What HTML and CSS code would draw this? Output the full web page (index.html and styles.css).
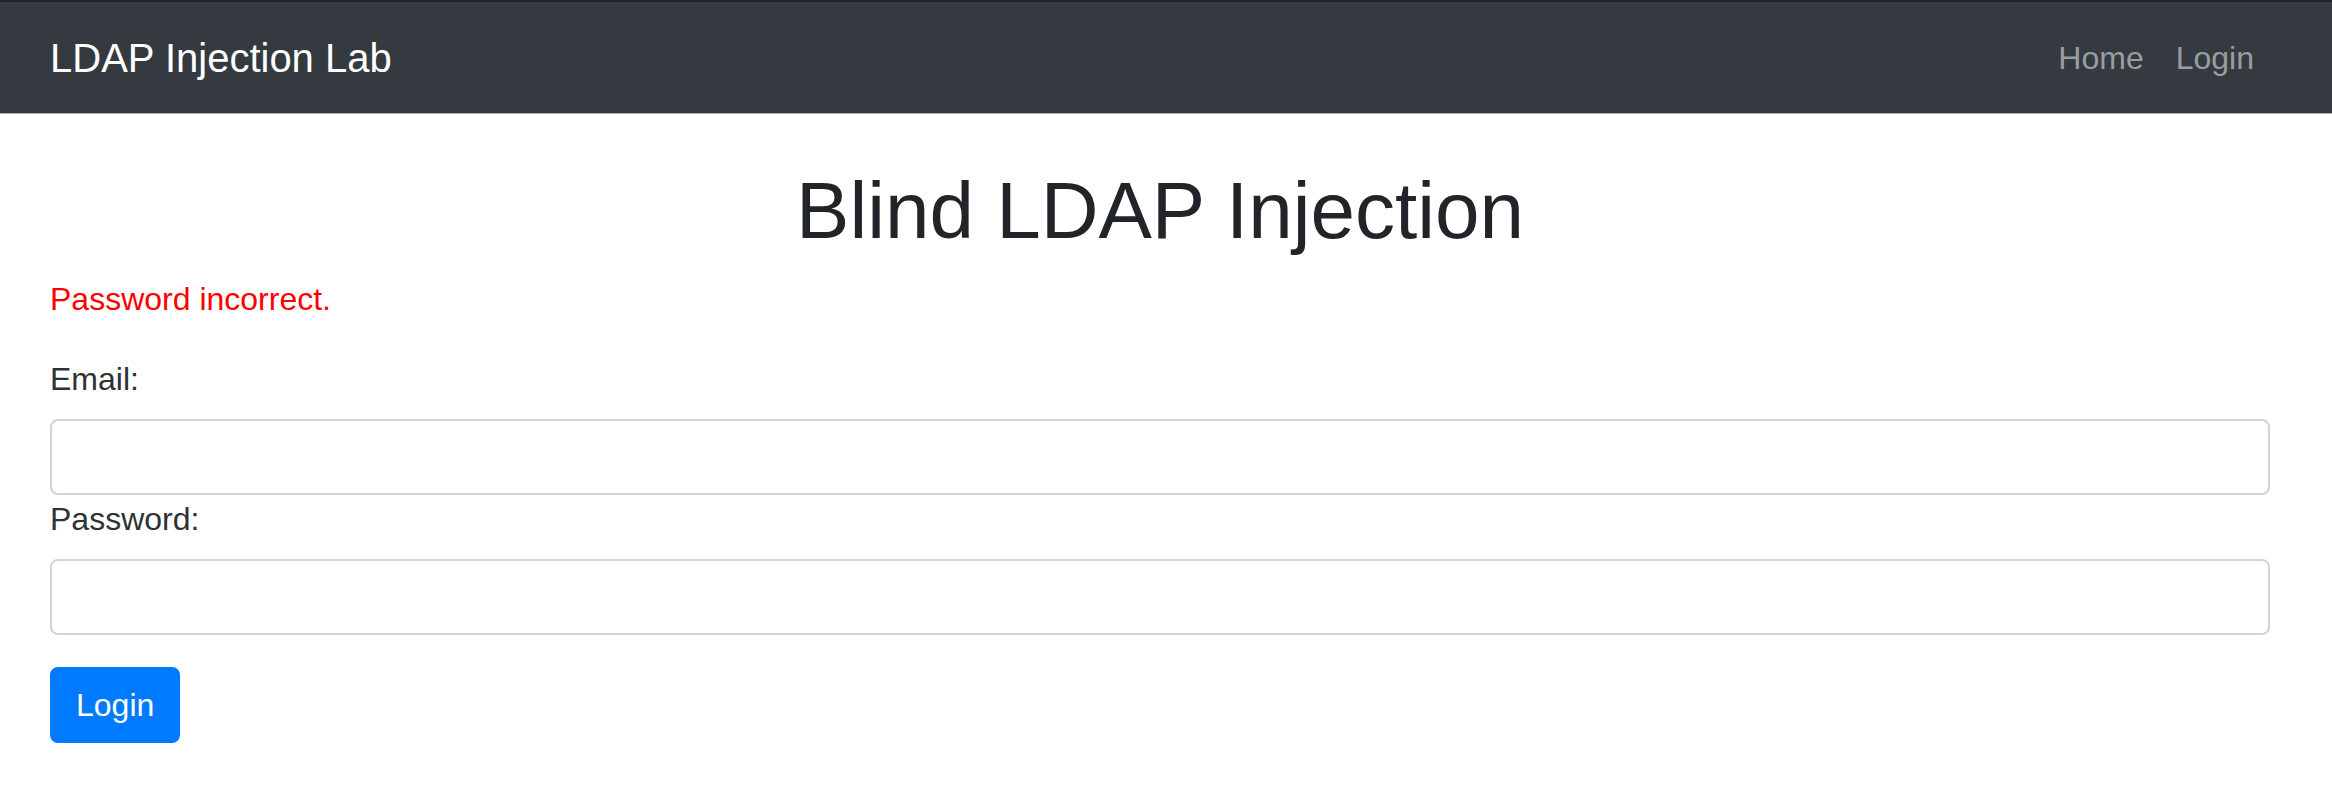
FILE: index.html
```html
<!DOCTYPE html>
<html lang="en">
<head>
<meta charset="utf-8">
<title>Blind LDAP Injection</title>
<link rel="stylesheet" href="styles.css">
</head>
<body>
<div class="topline"></div>
<nav class="navbar">
  <a class="brand" href="#">LDAP Injection Lab</a>
  <ul class="nav">
    <li><a class="nav-link" href="#">Home</a></li>
    <li><a class="nav-link" href="#">Login</a></li>
  </ul>
</nav>
<main class="content">
  <h1 class="title">Blind LDAP Injection</h1>
  <p class="error">Password incorrect.</p>
  <form class="form">
    <label class="label" for="email">Email:</label>
    <input class="input" id="email" type="text">
    <label class="label" for="password">Password:</label>
    <input class="input" id="password" type="password">
    <button class="btn" type="button">Login</button>
  </form>
</main>
</body>
</html>
```
FILE: styles.css
```css
* { box-sizing: border-box; }
html, body { margin: 0; padding: 0; }
body {
  background: #fff;
  color: #212529;
  font-family: "Liberation Sans", Arial, sans-serif;
  font-size: 32px;
  line-height: 48px;
}
.topline { height: 2px; background: #1f2327; }
.navbar {
  display: flex;
  align-items: center;
  justify-content: space-between;
  height: 112px;
  padding: 0 62px 0 50px;
  background: #343a40;
  border-bottom: 1px solid #a9adb1;
}
.brand {
  color: #fff;
  font-size: 40px;
  line-height: 60px;
  padding: 10px 0;
  text-decoration: none;
}
.nav { display: flex; list-style: none; margin: 0; padding: 0; }
.nav-link {
  display: block;
  padding: 16px;
  color: #9a9da0;
  text-decoration: none;
  font-size: 32px;
  line-height: 48px;
}
.content { padding: 0 62px 0 50px; }
.title {
  margin: 49px 0 16px;
  font-size: 80px;
  line-height: 96px;
  font-weight: 500;
  text-align: center;
  color: #212529;
}
.error { margin: 0 0 32px; color: #ff0000; }
.form { display: flex; flex-direction: column; align-items: flex-start; }
.label { display: block; margin-bottom: 16px; color: #2d3237; }
.input {
  display: block;
  width: 100%;
  height: 76px;
  padding: 12px 24px;
  font: inherit;
  color: #495057;
  background: #fff;
  border: 2px solid #ced4da;
  border-radius: 8px;
  outline: none;
}
.btn {
  margin-top: 32px;
  padding: 12px 24px;
  font: inherit;
  line-height: 48px;
  color: #fff;
  background: #007bff;
  border: 2px solid #007bff;
  border-radius: 8px;
  cursor: pointer;
}
```
